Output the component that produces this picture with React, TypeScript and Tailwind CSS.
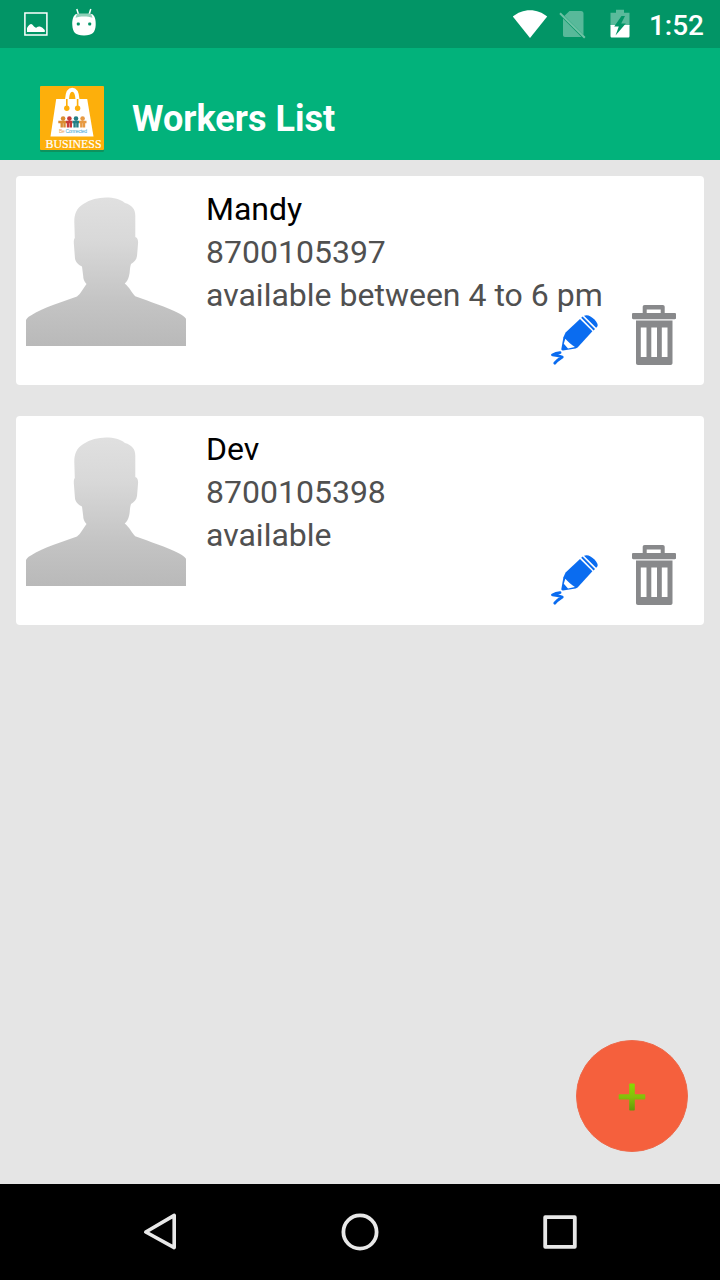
import { useId } from "react";

type Worker = { name: string; phone: string; note: string };

const WORKERS: Worker[] = [
  { name: "Mandy", phone: "8700105397", note: "available between 4 to 6 pm" },
  { name: "Dev", phone: "8700105398", note: "available" },
];

function StatusBar() {
  return (
    <div className="flex h-12 items-center bg-[#029566] text-white">
      <svg viewBox="0 0 24 24" className="ml-6 h-6 w-6" fill="none">
        <rect x="0.9" y="1" width="22" height="22" stroke="currentColor" strokeWidth="1.5" />
        <path
          d="M3 20v-4c1.5-2.5 3-4 4.200-4s3 3.300 5 3.800c1.200-1 2.400-1.500 3.600-1.300 1.600.3 3.800 2.200 5 3.500v2z"
          fill="currentColor"
        />
      </svg>
      <svg viewBox="0 0 24 28" className="ml-6 h-7 w-6 overflow-visible" fill="none">
        <path d="M4.800-1l2.200 7M18.800-1l-2.200 7" stroke="currentColor" strokeWidth="1.5" />
        <path
          d="M4 4h16c2.800 1.500 4 6 3.700 11-.4 7-3 10.500-11.700 10.500S.7 22 .3 15C0 10 1.200 5.500 4 4z"
          fill="currentColor"
        />
        <path d="M5 3.500h14l1.500 4.300c-5-1.600-12-1.600-17 0z" fill="#8fd0b8" />
        <rect x="4.800" y="12.500" width="3" height="3" rx="1" fill="#029566" />
        <rect x="16.200" y="12.500" width="3" height="3" rx="1" fill="#029566" />
      </svg>

      <div className="ml-auto flex items-center">
        <svg viewBox="0 0 36 30" className="h-[30px] w-9" fill="currentColor">
          <path d="M.8 7.500C5.500 3.500 11.500 1.200 18 1.200s12.500 2.300 17.200 6.300L18 29z" />
        </svg>
        <svg viewBox="0 0 28 30" className="ml-[11px] h-[30px] w-7" fill="none">
          <path
            d="M10.500 2H22c1.600 0 2.500.9 2.500 2.500V26L7 8.500l-1.500-1.700zM4 9.500l18.500 18.500H6c-1.300 0-2-.7-2-2z"
            fill="#fff"
            fillOpacity=".34"
          />
          <path d="M1 4.300l24.800 24.400" stroke="#6fc3a6" strokeWidth="2" />
        </svg>
        <svg viewBox="0 0 20 30" className="ml-[23px] h-[30px] w-5">
          <path d="M6 .8h8v3h5.500V17H.5V3.800H6z" fill="#fff" fillOpacity=".35" />
          <path d="M.5 16h19v11c0 1-.6 1.500-1.500 1.500H2C1 28.500.5 28 .5 27z" fill="#fff" />
          <path d="M11.500 7L4.200 17.600h4.600L5.500 26.500l10.300-12.100h-4.600L15 7z" fill="#029566" />
        </svg>
        <span className="mt-1 mr-4 ml-[19px] text-[28px] leading-8 font-medium">1:52</span>
      </div>
    </div>
  );
}

function AppLogo() {
  return (
    <svg viewBox="0 0 64 66" className="h-[66px] w-16">
      <rect y="2" width="64" height="64" rx="1.500" fill="#157f4c" fillOpacity=".6" />
      <rect width="64" height="64" rx="1" fill="#fdaf0b" />
      <path d="M16.200 13h31l6.300 37.500H10.500z" fill="#fff" />
      <path d="M27 13.500c.3-5.500 2-9.800 5.200-9.800s5 4.300 5.300 9.800" fill="none" stroke="#fff" strokeWidth="4" />
      <path d="M26.800 22v-9M37.600 22v-9" fill="none" stroke="#fdaf0b" strokeWidth="1.600" />
      <circle cx="26.800" cy="22.300" r="2.700" fill="#fdaf0b" />
      <circle cx="37.600" cy="22.300" r="2.700" fill="#fdaf0b" />
      <g strokeWidth="2.400" fill="none">
        <path d="M18.300 36h8M21.700 35v6.500M24.500 35v6.500" stroke="#d98c32" />
        <path d="M26 36h6.500M28 35v6.500M30.800 35v6.500" stroke="#c83a38" />
        <path d="M32.500 36h6.500M34.600 35v6.500M37.400 35v6.500" stroke="#237f86" />
        <path d="M39 36h7.500M41.300 35v6.500M44 35v6.500" stroke="#e79a43" />
      </g>
      <circle cx="23.100" cy="32.600" r="2.300" fill="#d98c32" />
      <circle cx="29.400" cy="32.600" r="2.300" fill="#c83a38" />
      <circle cx="36" cy="32.600" r="2.300" fill="#237f86" />
      <circle cx="42.600" cy="32.600" r="2.300" fill="#e79a43" />
      <text x="19" y="46.500" fontSize="5" textLength="28" fill="#43a7d5" className="font-['Liberation_Sans',sans-serif]">
        <tspan fill="#eea45b">Be</tspan> Connected
      </text>
      <text x="5.500" y="62.300" fontSize="12.500" textLength="56" lengthAdjust="spacingAndGlyphs" fill="#fff" stroke="#fff" strokeWidth=".2" className="font-['Liberation_Serif',serif]">
        BUSINESS
      </text>
    </svg>
  );
}

function Avatar() {
  const id = useId();
  return (
    <svg viewBox="0 0 160 160" className="h-40 w-40 shrink-0">
      <defs>
        <linearGradient id={id} x1="0" y1="0" x2="0" y2="1">
          <stop offset="0" stopColor="#e0e0e0" />
          <stop offset=".3" stopColor="#d8d8d8" />
          <stop offset=".7" stopColor="#c4c4c4" />
          <stop offset="1" stopColor="#b9b9b9" />
        </linearGradient>
      </defs>
      <path
        d="M0 160v-26c1-2 2-3 4-4 8-5 15-8 23-11l24-8.500c4-3 6-8 9.500-12.500-2.500-3-3.300-5-3.300-8l-1.200-9.500c-4-1.500-6.500-5-7-8L47.800 57c0-3 .2-4 1-5L48.300 36c0-8 2-13.500 9-18 7-4.500 14.700-6.500 22.700-6.500 8 0 14 1.500 19 5.500 7 2 10.300 6 10.300 13v21c2.700 1 3 4 2.700 7l-1 12c-.5 4-3 6-6 8-1.500 4-.8 8-2 12-.8 3-2 5.500-4.300 7.500 5 4 7 9 10.500 12.800 15 5.500 31 10.700 44 17.200 4 2 6 4 7.800 6.500v26z"
        fill={`url(#${id})`}
      />
    </svg>
  );
}

function PencilIcon() {
  return (
    <svg viewBox="0 0 48 50" className="h-[50px] w-12 overflow-visible" fill="#0a6cf0">
      <path d="M15.600 17.500L30 3.900 42.400 16.300 27.600 32.500l-2 1L13 35.400c-1.200.1-1.800-.4-1.600-1.600l2-11.500z" />
      <path d="M15.300 23.800c2.800 3 6.200 6 9.700 8.300l-7 1.300-4.200-4.600z" fill="#fff" />
      <path d="M31.200 2.800l1.400-1.200 12.400 12.300-1.400 1.600z" />
      <path d="M34 .7C36-.2 38.500.1 40.500 1.500c3 1.800 5.500 4 6.800 7 .9 2.200.2 3.200-1.200 4.300z" />
      <path
        d="M10 37.600c-2.800.3-5.200 1-7.500 2.300 3.100.3 6.300.9 9.700 2.200-2.900 1.900-5.400 3.400-7.400 6.100"
        fill="none"
        stroke="#0a6cf0"
        strokeWidth="2.900"
        strokeLinecap="round"
        strokeLinejoin="round"
      />
    </svg>
  );
}

function TrashIcon() {
  return (
    <svg viewBox="0 0 44 60" className="h-[60px] w-11" fill="#88898b">
      <path
        fillRule="evenodd"
        d="M10.700 8V2c0-1.200.7-2 2-2h18c1.300 0 2 .8 2 2v6h10c.8 0 1.300.5 1.300 1.300V13c0 .8-.5 1.200-1.300 1.200H1.300C.5 14.200 0 13.800 0 13V9.300C0 8.500.5 8 1.300 8zM14.700 4.500v3.500h14V4.500z"
      />
      <path
        fillRule="evenodd"
        d="M4 15.600h36.500V58c0 1.300-.7 2-2 2H6c-1.300 0-2-.7-2-2zM8.800 22.600V52h5.700V22.600zM19.300 22.600V52H25V22.600zM29.800 22.600V52h5.700V22.600z"
      />
    </svg>
  );
}

function WorkerCard({ worker }: { worker: Worker }) {
  return (
    <li className="relative flex h-[209px] gap-5 rounded bg-white p-2.5">
      <Avatar />
      <div className="mt-0.5 text-[32px] leading-[43px] text-[#505050]">
        <h2 className="text-black">{worker.name}</h2>
        <p>{worker.phone}</p>
        <p className="whitespace-nowrap">{worker.note}</p>
      </div>
      {/* the actions overlap the last text line */}
      <div className="absolute right-7 bottom-5 flex items-end gap-[34px]">
        <button type="button" aria-label="Edit">
          <PencilIcon />
        </button>
        <button type="button" aria-label="Delete">
          <TrashIcon />
        </button>
      </div>
    </li>
  );
}

function NavBar() {
  return (
    <nav className="flex h-24 items-center justify-center gap-40 bg-black">
      <svg viewBox="0 0 40 40" className="h-10 w-10" fill="none" stroke="#e8e8e8" strokeWidth="3.600" strokeLinejoin="round">
        <path d="M34.200 3.400v32.200L5.800 20z" />
      </svg>
      <svg viewBox="0 0 40 40" className="h-10 w-10" fill="none" stroke="#e8e8e8" strokeWidth="3.800">
        <circle cx="20" cy="20" r="16.600" />
      </svg>
      <svg viewBox="0 0 40 40" className="h-10 w-10" fill="none" stroke="#e8e8e8" strokeWidth="3.800" strokeLinejoin="round">
        <rect x="5.200" y="5.200" width="29.600" height="29.600" />
      </svg>
    </nav>
  );
}

export default function App() {
  return (
    <div className="flex h-[1280px] w-[720px] flex-col bg-[#e5e5e5] font-[Roboto,sans-serif]">
      <StatusBar />
      <header className="flex h-28 items-end gap-7 bg-[#02b27b] pb-2 pl-10">
        <AppLogo />
        <h1 className="mb-[13px] text-4xl font-bold text-white">Workers List</h1>
      </header>

      <main className="relative flex-1 p-4">
        <ul className="flex flex-col gap-[31px]">
          {WORKERS.map((w) => (
            <WorkerCard key={w.phone} worker={w} />
          ))}
        </ul>
        <button
          type="button"
          aria-label="Add worker"
          className="absolute right-8 bottom-8 grid h-28 w-28 place-items-center rounded-full border border-[#ee6a4b] bg-[#f5603d]"
        >
          <svg viewBox="0 0 28 28" className="mt-0.5 h-7 w-7">
            <defs>
              <linearGradient id="plus" x1="0" y1="0" x2="0" y2="1">
                <stop offset="0" stopColor="#86dc00" />
                <stop offset=".5" stopColor="#84c00a" />
                <stop offset="1" stopColor="#629a08" />
              </linearGradient>
            </defs>
            <path
              d="M12 .5h4c.5 0 .8.300.8.800v10h9.700c.5 0 .8.300.8.800v3.600c0 .5-.3.800-.8.800h-9.700v10.200c0 .5-.3.800-.8.800h-4c-.5 0-.8-.3-.8-.8V16.500H1.500c-.5 0-.8-.3-.8-.8v-3.600c0-.5.300-.8.800-.8h9.700v-10c0-.5.300-.8.800-.8z"
              fill="url(#plus)"
            />
          </svg>
        </button>
      </main>

      <NavBar />
    </div>
  );
}
